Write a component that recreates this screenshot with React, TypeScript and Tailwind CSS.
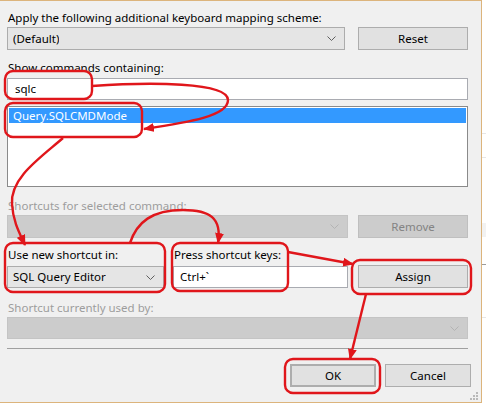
import React from 'react';

const RED = '#e0161b';

function Chevron({ color = '#5f5f5f' }: { color?: string }) {
  return (
    <svg width="9" height="5" viewBox="0 0 9 5" className="shrink-0">
      <path d="M0.5 0.5 L4.5 4.5 L8.5 0.5" fill="none" stroke={color} strokeWidth="1" />
    </svg>
  );
}

function Combo({ text, disabled, className = '' }: { text?: string; disabled?: boolean; className?: string }) {
  return (
    <div
      className={`flex items-center justify-between pl-[5px] pr-[8px] border ${
        disabled ? 'bg-[#cccccc] border-[#c4c4c4]' : 'bg-[#e5e5e5] border-[#acacac]'
      } ${className}`}
    >
      <span className="truncate">{text}</span>
      <Chevron color={disabled ? '#b3b3b3' : '#5f5f5f'} />
    </div>
  );
}

function Button({ label, disabled, focused, className = '' }: { label: string; disabled?: boolean; focused?: boolean; className?: string }) {
  return (
    <div
      className={`flex items-center justify-center ${
        focused ? 'border-2 border-[#2f7cc4]' : 'border'
      } ${disabled ? 'bg-[#cccccc] border-[#bfbfbf] text-[#838383]' : 'bg-[#e1e1e1] border-[#adadad]'} ${className}`}
    >
      {label}
    </div>
  );
}

function Label({ children, disabled, className = '' }: { children: React.ReactNode; disabled?: boolean; className?: string }) {
  return (
    <div className={`h-[15px] leading-[15px] whitespace-nowrap ${disabled ? 'text-[#9d9d9d]' : 'text-black'} ${className}`}>
      {children}
    </div>
  );
}

function Annotations() {
  return (
    <svg className="absolute inset-0 pointer-events-none" width="486" height="406" viewBox="0 0 486 406">
      <defs>
        <marker id="ah" markerWidth="11" markerHeight="9" refX="10" refY="4.5" orient="auto" markerUnits="userSpaceOnUse">
          <path d="M0,0 L11,4.5 L0,9 z" fill={RED} />
        </marker>
      </defs>
      <g fill="none" stroke={RED} strokeWidth="2.4">
        <rect x="5" y="71" width="87" height="28" rx="8" />
        <rect x="5" y="103" width="137" height="34" rx="8" />
        <rect x="5" y="243" width="160" height="49" rx="8" />
        <rect x="172" y="243" width="116" height="48" rx="8" />
        <rect x="352" y="260" width="119" height="34" rx="8" />
        <rect x="285" y="359" width="95" height="34" rx="8" />

        <path d="M92,86 C150,82 228,82 228,100 C228,116 190,122 144,129" markerEnd="url(#ah)" />
        <path d="M63,138 C40,158 10,178 12,204 C13,222 20,234 25,245" markerEnd="url(#ah)" />
        <path d="M130,243 C137,222 152,210 183,210 C210,210 222,218 218,243" markerEnd="url(#ah)" />
        <path d="M288,252 L353,264" markerEnd="url(#ah)" />
        <path d="M366,294 L350,359" markerEnd="url(#ah)" />
      </g>
    </svg>
  );
}

function ResizeGrip() {
  const dots = [
    [6, 0],
    [3, 3],
    [6, 3],
    [0, 6],
    [3, 6],
    [6, 6],
  ];
  return (
    <svg className="absolute right-[3px] bottom-[2px]" width="8" height="8" viewBox="0 0 8 8">
      {dots.map(([x, y], i) => (
        <rect key={i} x={x} y={y} width="2" height="2" fill="#b8b8b8" />
      ))}
    </svg>
  );
}

export default function App() {
  return (
    <div className="relative w-[486px] h-[406px] bg-white overflow-hidden flex text-[11.5px] text-black font-['Noto_Sans',sans-serif]">
      <div className="relative w-[482px] h-[403px] shrink-0 bg-[#f0f0f0] border-t border-r border-b border-[#dcb47c] flex flex-col pl-[7px] pr-[13px]">
        <Label className="mt-[9px] pl-[1px]">Apply the following additional keyboard mapping scheme:</Label>
        <div className="mt-[2px] flex h-[23px]">
          <Combo text="(Default)" className="w-[338px]" />
          <Button label="Reset" className="ml-[13px] w-[110px]" />
        </div>

        <Label className="mt-[10px] pl-[1px]">Show commands containing:</Label>
        <div className="mt-[3px] h-[22px] bg-white border border-[#a9abb1] flex items-center pl-[7px]">sqlc</div>

        <div className="mt-[6px] h-[81px] bg-white border border-[#8a8a8a] p-px">
          <div className="h-[15px] leading-[15px] bg-[#3399ff] text-white pl-[4px]">Query.SQLCMDMode</div>
        </div>

        <Label disabled className="mt-[11px] pl-[1px]">Shortcuts for selected command:</Label>
        <div className="mt-[2px] flex h-[23px]">
          <Combo disabled className="w-[341px]" />
          <Button label="Remove" disabled className="ml-[10px] w-[110px]" />
        </div>

        <div className="mt-[9px] flex items-end">
          <div className="w-[157px] flex flex-col">
            <Label className="pl-[1px]">Use new shortcut in:</Label>
            <Combo text="SQL Query Editor" className="mt-[4px] h-[22px]" />
          </div>
          <div className="ml-[9px] w-[175px] flex flex-col">
            <Label className="pl-[1px]">Press shortcut keys:</Label>
            <div className="mt-[4px] h-[22px] bg-white border border-[#a9abb1] flex items-center pl-[6px]">Ctrl+`</div>
          </div>
          <Button label="Assign" className="ml-[10px] w-[110px] h-[23px]" />
        </div>

        <Label disabled className="mt-[12px] pl-[1px]">Shortcut currently used by:</Label>
        <Combo disabled className="mt-[2px] h-[22px]" />

        <div className="mt-[9px] h-px bg-[#a0a0a0]" />

        <div className="mt-[15px] flex justify-end -mr-[3px]">
          <Button label="OK" focused className="w-[86px] h-[23px]" />
          <Button label="Cancel" className="ml-[9px] w-[86px] h-[23px]" />
        </div>

        <ResizeGrip />
      </div>

      <div className="flex-1 flex flex-col bg-white overflow-hidden">
        <div className="mt-[133px] h-px bg-[#e6e6e6]" />
        <div className="mt-[23px] h-px bg-[#e6e6e6]" />
        <div className="mt-[65px] h-[14px] bg-[#f2f2f2]" />
        <div className="mt-[27px] h-px bg-[#9c9c9c]" />
        <div className="mt-[52px] h-px bg-[#e6e6e6]" />
      </div>

      <Annotations />
    </div>
  );
}
